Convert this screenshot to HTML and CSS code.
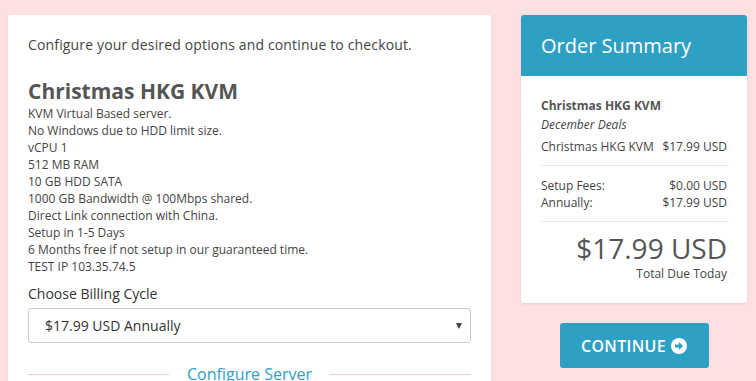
FILE: index.html
```html
<!DOCTYPE html>
<html lang="en">
<head>
  <meta charset="UTF-8" />
  <meta name="viewport" content="width=device-width, initial-scale=1.0"/>
  <title>Configure - Christmas HKG KVM</title>
  <link rel="stylesheet" href="styles.css">
</head>
<body>
  <div class="page">
    <div class="card config">
      <p class="intro">Configure your desired options and continue to checkout.</p>

      <h2 class="product-name">Christmas HKG KVM</h2>
      <div class="product-desc">
        KVM Virtual Based server.<br>
        No Windows due to HDD limit size.<br>
        vCPU 1<br>
        512 MB RAM<br>
        10 GB HDD SATA<br>
        1000 GB Bandwidth @ 100Mbps shared.<br>
        Direct Link connection with China.<br>
        Setup in 1-5 Days<br>
        6 Months free if not setup in our guaranteed time.<br>
        TEST IP 103.35.74.5
      </div>

      <label class="field-label" for="billing">Choose Billing Cycle</label>
      <div class="select-wrap">
        <select id="billing">
          <option>$17.99 USD Annually</option>
        </select>
      </div>

      <div class="section-title"><span>Configure Server</span></div>
    </div>

    <div class="side">
      <div class="card summary">
        <div class="summary-head">Order Summary</div>
        <div class="summary-body">
          <div class="sum-name">Christmas HKG KVM</div>
          <div class="sum-group">December Deals</div>
          <div class="sum-row">
            <span>Christmas HKG KVM</span>
            <span>$17.99 USD</span>
          </div>
          <hr>
          <div class="sum-row">
            <span>Setup Fees:</span>
            <span>$0.00 USD</span>
          </div>
          <div class="sum-row">
            <span>Annually:</span>
            <span>$17.99 USD</span>
          </div>
          <hr>
          <div class="total">$17.99 USD</div>
          <div class="total-label">Total Due Today</div>
        </div>
      </div>

      <button class="btn-continue">
        CONTINUE
        <svg width="16" height="16" viewBox="0 0 16 16">
          <circle cx="8" cy="8" r="8" fill="#fff"/>
          <path d="M4 6.6h4V4l4 4-4 4V9.4H4z" fill="#2ea0c4"/>
        </svg>
      </button>
    </div>
  </div>
</body>
</html>
```

FILE: styles.css
```css
body {
  font-family: 'Open Sans', sans-serif;
  margin: 0;
  padding: 0;
  background-color: #fde0e0;
  color: #555;
  overflow: hidden;
}

.page {
  display: grid;
  grid-template-columns: 483px 226px;
  column-gap: 30px;
  padding: 15px 9px 0 8px;
  align-items: start;
}

.card {
  background-color: #fff;
  border-radius: 3px;
  box-shadow: 0 1px 3px rgba(0,0,0,0.08);
}

.config {
  padding: 20px 20px 0 20px;
  height: 380px;
  box-sizing: border-box;
}

.intro {
  margin: 0;
  font-size: 14px;
  line-height: 20px;
  letter-spacing: 0.15px;
  color: #444;
}

.product-name {
  margin: 23px 0 0 0;
  font-size: 21px;
  font-weight: 700;
  line-height: 26px;
  color: #555;
}

.product-desc {
  margin-top: 1px;
  font-size: 12px;
  line-height: 17px;
  color: #444;
}

.field-label {
  display: block;
  margin-top: 9px;
  font-size: 14px;
  line-height: 20px;
  color: #333;
}

.select-wrap {
  margin-top: 4px;
  position: relative;
}

.select-wrap select {
  width: 100%;
  height: 35px;
  padding: 0 16px;
  font-family: 'Open Sans', sans-serif;
  font-size: 14px;
  color: #333;
  background-color: #fff;
  border: 1px solid #ccc;
  border-radius: 3px;
  -webkit-appearance: none;
  appearance: none;
}

.select-wrap::after {
  content: "";
  position: absolute;
  right: 9px;
  top: 15px;
  border-left: 3.5px solid transparent;
  border-right: 3.5px solid transparent;
  border-top: 6px solid #444;
}

.section-title {
  display: flex;
  align-items: center;
  gap: 18px;
  margin-top: 20px;
  font-size: 16px;
  line-height: 22px;
  color: #2ea0c4;
}

.section-title::before,
.section-title::after {
  content: "";
  flex: 1;
  border-top: 1px solid #fbcaca;
}

.summary-head {
  background-color: #2ea0c4;
  color: #fff;
  font-size: 20px;
  line-height: 26px;
  padding: 18px 20px 17px 20px;
  border-radius: 3px 3px 0 0;
}

.summary-body {
  padding: 21px 20px 21px 20px;
  font-size: 12px;
  line-height: 17px;
  color: #444;
}

.sum-name {
  font-weight: 700;
  color: #555;
}

.sum-group {
  font-style: italic;
  margin-top: 2px;
}

.sum-row {
  display: flex;
  justify-content: space-between;
}

.sum-group + .sum-row {
  margin-top: 5px;
}

.summary-body hr {
  border: none;
  border-top: 1px solid #fde0e0;
  margin: 10px 0 11px 0;
}

.total {
  text-align: right;
  font-size: 28px;
  line-height: 30px;
  margin-top: 11px;
  color: #555;
}

.total-label {
  text-align: right;
  margin-top: 2px;
}

.btn-continue {
  display: flex;
  align-items: center;
  gap: 5px;
  margin: 20px auto 0 auto;
  width: 149px;
  height: 45px;
  justify-content: center;
  background-color: #2ea0c4;
  color: #fff;
  border: none;
  border-radius: 3px;
  font-family: 'Open Sans', sans-serif;
  font-size: 16px;
  font-weight: 600;
  letter-spacing: 0.3px;
  cursor: pointer;
}
```
